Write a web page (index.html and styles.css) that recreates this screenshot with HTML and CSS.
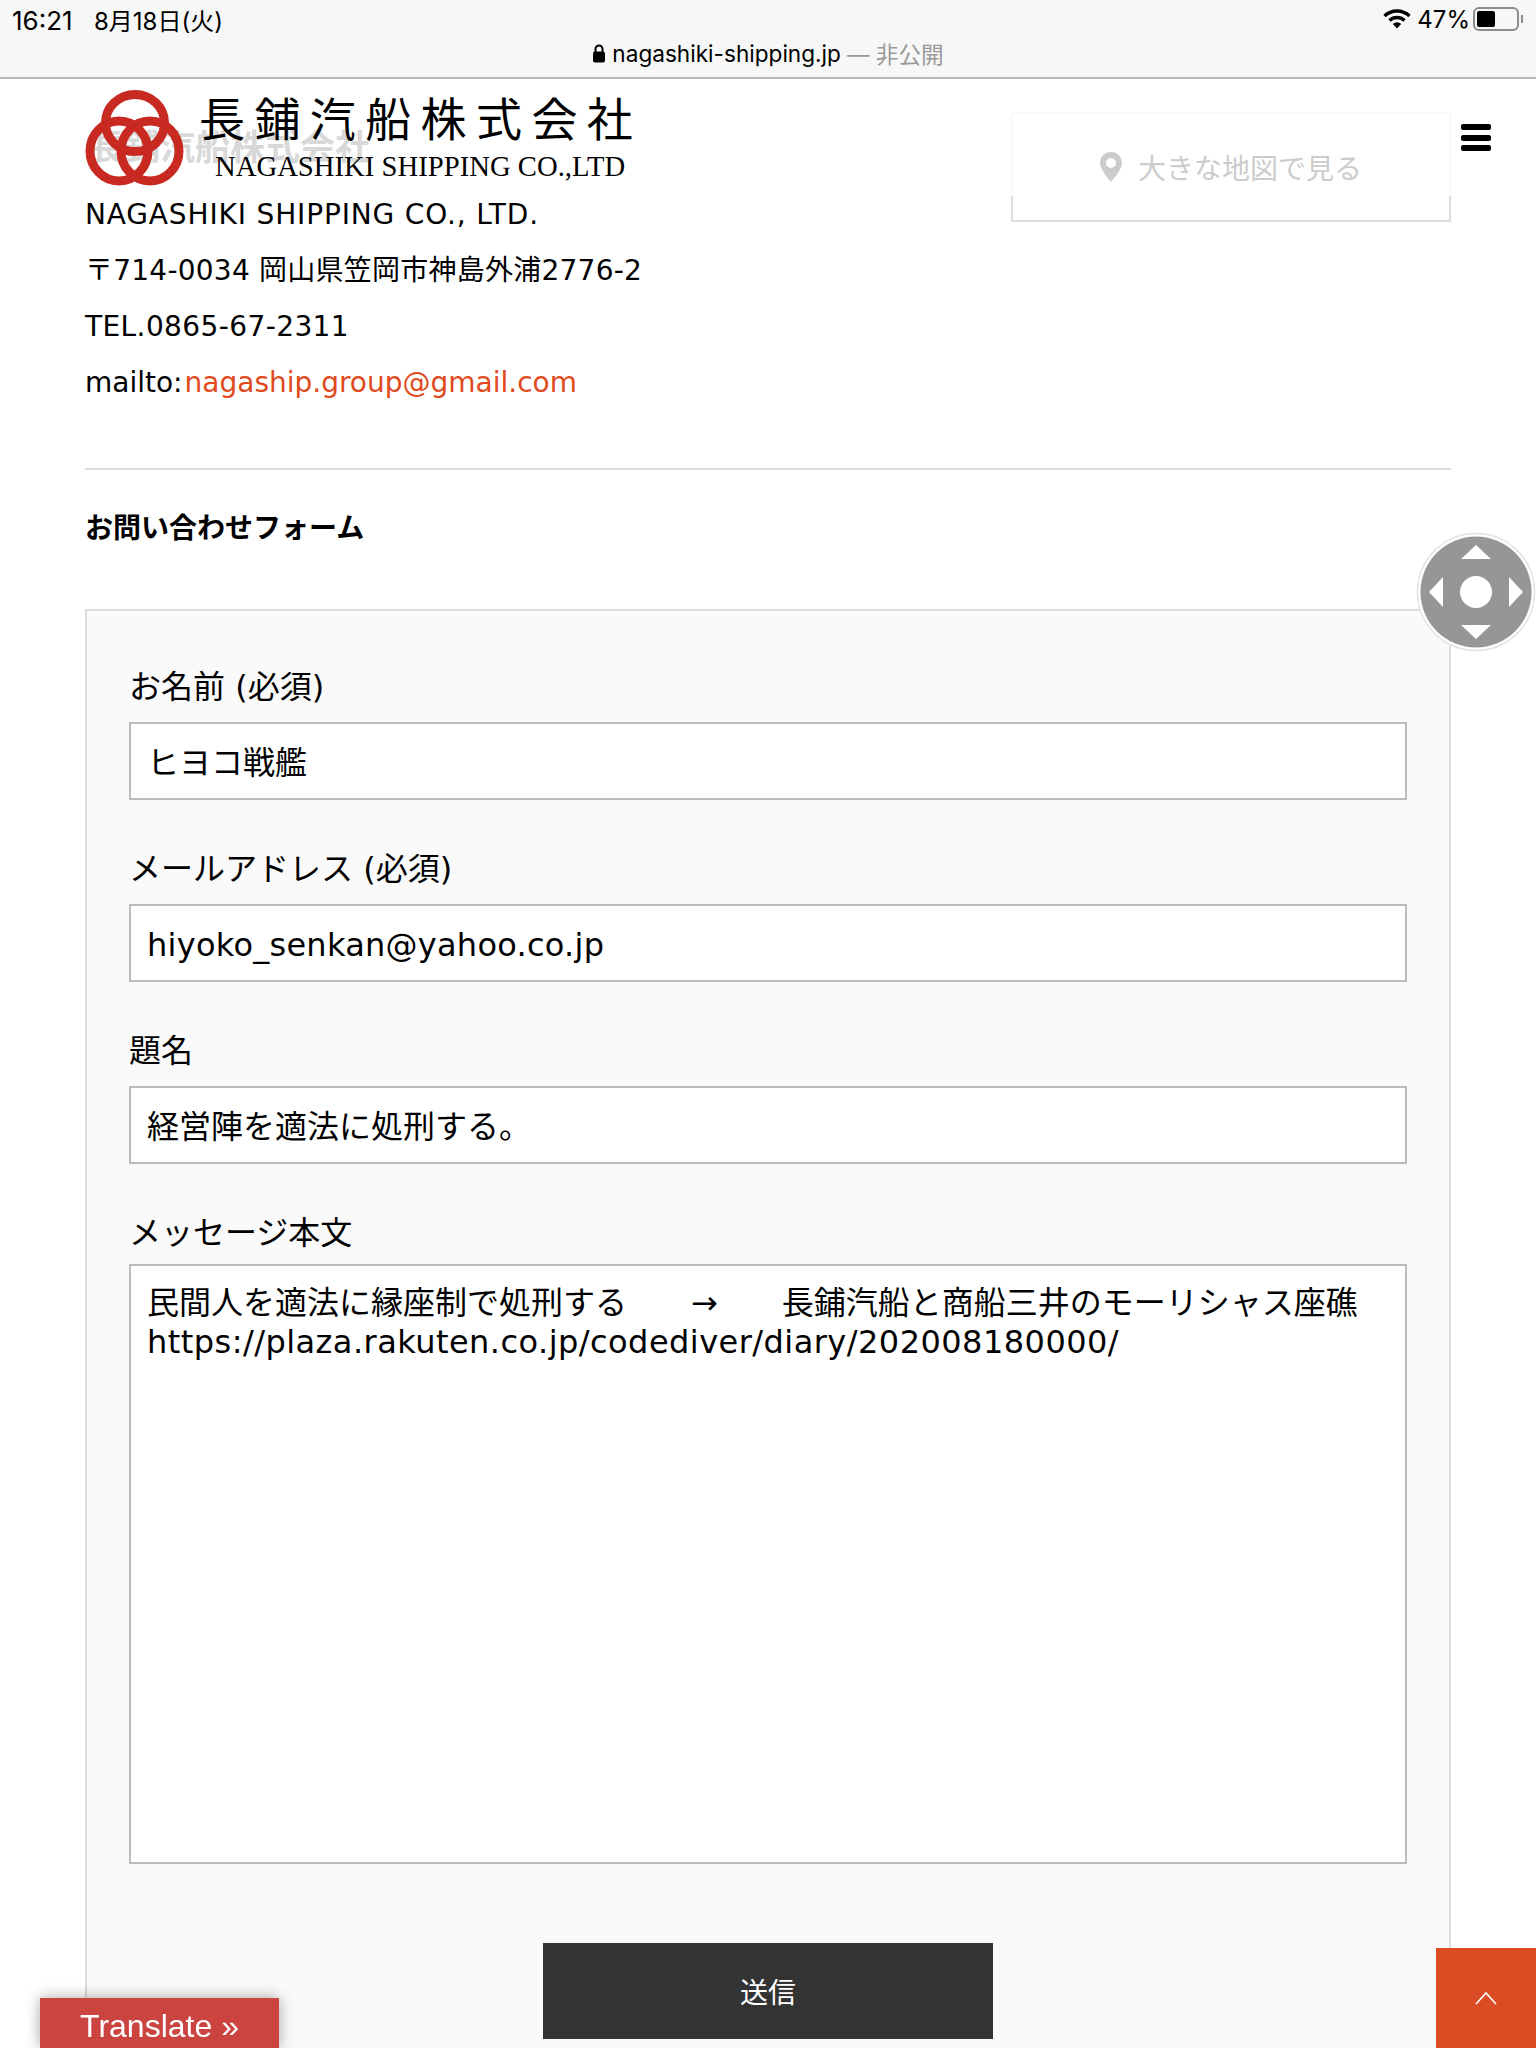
FILE: index.html
```html
<!DOCTYPE html>
<html lang="ja">
   <head>
      <meta charset="utf-8">
      <title>お問い合わせフォーム</title>
      <link rel="stylesheet" href="styles.css">
   </head>
   <body>
      <div class="statusbar">
         <div class="status-top">
            <span class="status-time">16:21 <span class="status-date">8月18日(火)</span></span>
            <span class="status-right">
               <svg class="wifi" width="28" height="20" viewBox="0 0 28 20">
                  <path d="M1.5 7 A18 18 0 0 1 26.5 7" fill="none" stroke="#000" stroke-width="3.4"/>
                  <path d="M6.5 11.5 A11 11 0 0 1 21.5 11.5" fill="none" stroke="#000" stroke-width="3.4"/>
                  <path d="M14 19.5 L9.8 15 A6 6 0 0 1 18.2 15 Z" fill="#000"/>
               </svg>
               <span>47%</span>
               <span class="battery"><span class="battery-level"></span></span>
               <span class="battery-tip"></span>
            </span>
         </div>
         <div class="status-url">
            <svg width="14" height="19" viewBox="0 0 14 19">
               <path d="M3.5 8 V5 a3.5 3.5 0 0 1 7 0 V8" fill="none" stroke="#000" stroke-width="2"/>
               <rect x="1" y="7.5" width="12" height="11" rx="2" fill="#000"/>
            </svg>
            <span>nagashiki-shipping.jp</span>
            <span class="status-private">— 非公開</span>
         </div>
      </div>

      <header class="site-logo">
         <svg width="100" height="96" viewBox="0 0 100 96">
            <g fill="none" stroke="#c82a22" stroke-width="9">
               <ellipse cx="50" cy="33" rx="29.5" ry="28.5"/>
               <ellipse cx="34" cy="61" rx="29" ry="30"/>
               <ellipse cx="65" cy="61" rx="29" ry="30"/>
            </g>
         </svg>
         <div class="logo-text">
            <div class="logo-ja">長鋪汽船株式会社</div>
            <div class="logo-en">NAGASHIKI SHIPPING CO.,LTD</div>
         </div>
      </header>
      <div class="menu-button"><span></span><span></span><span></span></div>

      <main class="content">
         <section class="company">
            <div class="company-info">
               <h2 class="company-name">長鋪汽船株式会社</h2>
               <p class="line-name">NAGASHIKI SHIPPING CO., LTD.</p>
               <p class="line-address">〒714-0034 岡山県笠岡市神島外浦2776-2</p>
               <p class="line-tel">TEL.0865-67-2311</p>
               <p>mailto:<a href="#">nagaship.group@gmail.com</a></p>
            </div>
            <a class="map-button" href="#">
               <svg width="22" height="30" viewBox="0 0 22 30">
                  <path fill-rule="evenodd" fill="#ccc" d="M11 0 C4.9 0 0 4.9 0 11 C0 18 11 30 11 30 C11 30 22 18 22 11 C22 4.9 17.1 0 11 0 Z M11 6 A5 5 0 1 1 11 16 A5 5 0 1 1 11 6 Z"/>
               </svg>
               <span>大きな地図で見る</span>
            </a>
         </section>

         <hr class="divider">
         <h3 class="form-title">お問い合わせフォーム</h3>

         <form class="contact-form">
            <div class="field">
               <label>お名前 (必須)</label>
               <input type="text" value="ヒヨコ戦艦">
            </div>
            <div class="field">
               <label>メールアドレス (必須)</label>
               <input class="input-email" type="text" value="hiyoko_senkan@yahoo.co.jp">
            </div>
            <div class="field">
               <label>題名</label>
               <input type="text" value="経営陣を適法に処刑する。">
            </div>
            <div class="field">
               <label>メッセージ本文</label>
               <div class="message-box" role="textbox">
                  <div>民間人を適法に縁座制で処刑する　　→　　長鋪汽船と商船三井のモーリシャス座礁</div>
                  <div class="message-url">https://plaza.rakuten.co.jp/codediver/diary/202008180000/</div>
               </div>
            </div>
            <button class="submit-button" type="button">送信</button>
         </form>
      </main>

      <svg class="joystick" width="120" height="120" viewBox="0 0 120 120">
         <circle cx="60" cy="60" r="57" fill="none" stroke="#fff" stroke-width="3"/>
         <circle cx="60" cy="60" r="58.5" fill="none" stroke="#e4e4e4" stroke-width="1.5"/>
         <circle cx="60" cy="60" r="55.5" fill="#8b8b8b" fill-opacity="0.9"/>
         <circle cx="60" cy="60" r="16" fill="#fff"/>
         <path fill="#fff" d="M60 13 L75 27 H45 Z M60 107 L75 93 H45 Z M13 60 L27 45 V75 Z M107 60 L93 45 V75 Z"/>
      </svg>
      <div class="translate">Translate »</div>
      <a class="page-top" href="#">
         <svg width="24" height="14" viewBox="0 0 24 14"><path d="M2 13 L12 2 L22 13" fill="none" stroke="#fff" stroke-width="1.6"/></svg>
      </a>
   </body>
</html>
```

FILE: styles.css
```css
html {
   height: 2048px;
   overflow: hidden;
}
body {
   margin: 0;
   height: 2048px;
   overflow: hidden;
   background: #fff;
   color: #000;
   font-family: "DejaVu Sans", "Noto Sans CJK JP", sans-serif;
   font-size: 28px;
}
.statusbar {
   height: 79px;
   box-sizing: border-box;
   background: #f7f7f7;
   border-bottom: 2px solid #b8b8b8;
   font-family: Inter, "Noto Sans CJK JP", sans-serif;
   font-size: 26px;
}
.status-top {
   display: flex;
   justify-content: space-between;
   align-items: center;
   height: 38px;
   padding: 0 13px 0 12px;
}
.status-date {
   margin-left: 14px;
   font-size: 24px;
}
.status-right {
   display: flex;
   align-items: center;
   gap: 3px;
   font-size: 24px;
}
.wifi {
   margin-right: 3px;
}
.battery {
   display: block;
   width: 46px;
   height: 24px;
   box-sizing: border-box;
   padding: 2px;
   border: 2px solid #8c8c8c;
   border-radius: 6px;
}
.battery-level {
   display: block;
   width: 18px;
   height: 100%;
   background: #000;
   border-radius: 2px;
}
.battery-tip {
   width: 2px;
   height: 8px;
   margin-left: -1px;
   background: #8c8c8c;
}
.status-url {
   display: flex;
   justify-content: center;
   align-items: center;
   gap: 6px;
   margin-top: -1px;
   font-size: 22.6px;
}
.status-private {
   color: #999;
}
.site-logo {
   position: absolute;
   left: 85px;
   top: 90px;
   display: flex;
}
.logo-text {
   margin-left: 14px;
   font-family: "Liberation Serif", "Noto Sans CJK JP", serif;
}
.logo-ja {
   font-size: 46px;
   letter-spacing: 9.4px;
   line-height: 62px;
}
.logo-en {
   margin-left: 16px;
   font-size: 28.7px;
   line-height: 28px;
   white-space: nowrap;
}
.menu-button {
   position: absolute;
   left: 1461px;
   top: 124px;
   width: 30px;
}
.menu-button span {
   display: block;
   height: 6px;
   margin-bottom: 4.5px;
   border-radius: 2px;
   background: #000;
}
.content {
   padding: 0 85px;
}
.company {
   display: flex;
   justify-content: space-between;
   align-items: flex-start;
}
.company-name {
   margin: 50px 0 20px 5px;
   color: #d8d8d8;
   font-size: 35px;
   font-weight: 700;
   line-height: 38px;
}
.company-info p {
   margin: 0;
   line-height: 56px;
}
.company-info .line-name {
   letter-spacing: 0.85px;
}
.company-info .line-address {
   letter-spacing: 0.24px;
}
.company-info .line-tel {
   letter-spacing: 0.4px;
}
.company-info a {
   margin-left: 2px;
   color: #e04a1c;
   text-decoration: none;
}
.map-button {
   display: flex;
   justify-content: center;
   align-items: center;
   gap: 16px;
   position: relative;
   width: 440px;
   height: 110px;
   margin-top: 33px;
   box-sizing: border-box;
   border: 2px solid #f8f8f8;
   border-bottom: 2px solid #ddd;
   color: #ccc;
   text-decoration: none;
}
.map-button::after {
   content: "";
   position: absolute;
   left: -2px;
   right: -2px;
   bottom: -2px;
   height: 26px;
   border-left: 2px solid #ddd;
   border-right: 2px solid #ddd;
}
.divider {
   margin: 57px 0 0;
   border: 0;
   border-top: 2px solid #ddd;
}
.form-title {
   margin: 38px 0 0;
   font-size: 28px;
   font-weight: 700;
   line-height: 42px;
}
.contact-form {
   margin-top: 59px;
   padding: 48px 42px 0;
   height: 1600px;
   background: #fafafa;
   border: 2px solid #ddd;
}
.field {
   margin-bottom: 41px;
}
.field label {
   display: block;
   margin-bottom: 7px;
   font-size: 32px;
   line-height: 56px;
}
.field input,
.message-box {
   display: block;
   width: 100%;
   box-sizing: border-box;
   margin: 0;
   padding: 0 16px;
   background: #fff;
   border: 2px solid #bbb;
   border-radius: 0;
   color: #000;
   font-family: "DejaVu Sans", "Noto Sans CJK JP", sans-serif;
   font-size: 32px;
   outline: none;
}
.field input {
   height: 78px;
   padding-bottom: 2px;
}
.field .input-email {
   padding-top: 3px;
   padding-bottom: 0;
   letter-spacing: 0.26px;
}
.message-box {
   height: 600px;
   margin-top: -4px;
   padding-top: 18px;
   line-height: 39px;
}
.message-url {
   letter-spacing: 0.46px;
}
.submit-button {
   display: block;
   width: 450px;
   height: 96px;
   margin: 79px auto 0;
   background: #333;
   border: 0;
   color: #fff;
   font-family: "Noto Sans CJK JP", sans-serif;
   font-size: 28px;
}
.joystick {
   position: fixed;
   left: 1416px;
   top: 532px;
}
.translate {
   position: fixed;
   left: 40px;
   top: 1998px;
   width: 239px;
   height: 50px;
   background: #cc4440;
   box-shadow: 0 0 14px rgba(0, 0, 0, 0.35);
   color: #fff;
   font-family: "Liberation Sans", sans-serif;
   font-size: 32px;
   line-height: 56px;
   text-align: center;
}
.page-top {
   display: flex;
   justify-content: center;
   align-items: center;
   position: fixed;
   left: 1436px;
   top: 1948px;
   width: 100px;
   height: 100px;
   background: #dc4c24;
}
```
